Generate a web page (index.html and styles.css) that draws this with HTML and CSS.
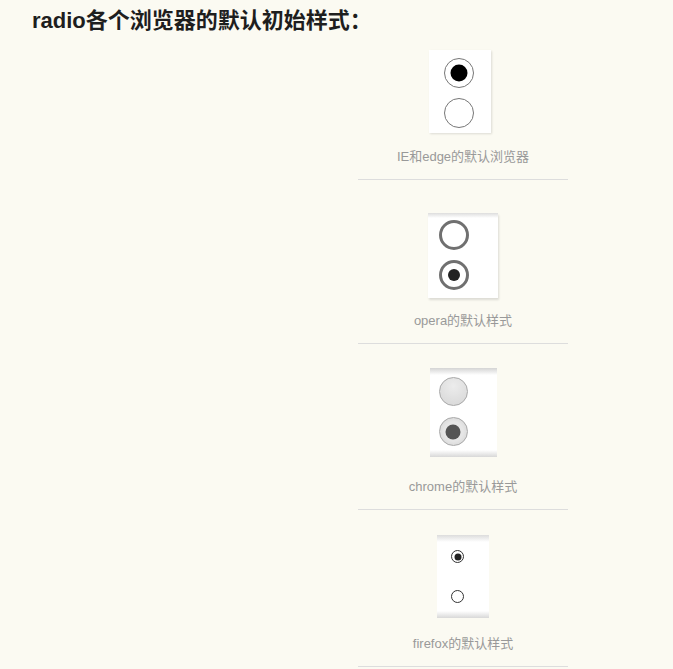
FILE: index.html
```html
<!DOCTYPE html>
<html lang="zh-CN">
  <head>
    <meta charset="UTF-8" />
    <meta name="viewport" content="width=device-width, initial-scale=1.0" />
    <title>radio默认样式</title>
    <link rel="stylesheet" href="styles.css">
  </head>
  <body>
    <h2 class="title">radio各个浏览器的默认初始样式：</h2>

    <div class="shots">
      <div class="shot shot-ie">
        <div class="frame">
          <span class="radio checked"></span>
          <span class="radio"></span>
        </div>
        <p class="caption">IE和edge的默认浏览器</p>
      </div>

      <div class="shot shot-opera">
        <div class="frame">
          <span class="radio"></span>
          <span class="radio checked"></span>
        </div>
        <p class="caption">opera的默认样式</p>
      </div>

      <div class="shot shot-chrome">
        <div class="frame">
          <span class="radio"></span>
          <span class="radio checked"></span>
        </div>
        <p class="caption">chrome的默认样式</p>
      </div>

      <div class="shot shot-firefox">
        <div class="frame">
          <span class="radio checked"></span>
          <span class="radio"></span>
        </div>
        <p class="caption">firefox的默认样式</p>
      </div>
    </div>
  </body>
</html>
```

FILE: styles.css
```css
* {
  margin: 0;
  padding: 0;
  box-sizing: border-box;
}

body {
  font-family: 'Liberation Sans', 'Noto Sans CJK SC', sans-serif;
  background: #fbfaf2;
  color: #333;
}

.title {
  margin: 8px 0 0 32px;
  font-size: 22px;
  line-height: 26px;
  font-weight: bold;
  color: #1e1e1e;
}

.shots {
  width: 210px;
  margin-left: 358px;
  margin-top: 16px;
}

.shot {
  display: flex;
  flex-direction: column;
  align-items: center;
  border-bottom: 1px solid #ddd;
  padding-bottom: 14px;
}

.caption {
  font-size: 13px;
  line-height: 16px;
  color: #999;
}

.frame {
  display: flex;
  flex-direction: column;
  align-items: flex-start;
  background: #fff;
}

.radio {
  display: block;
  position: relative;
  border-radius: 50%;
}

.radio.checked::after {
  content: '';
  position: absolute;
  top: 50%;
  left: 50%;
  border-radius: 50%;
  transform: translate(-50%, -50%);
}

/* IE / edge */
.shot-ie .frame {
  width: 62px;
  height: 83px;
  padding: 8px 0 0 15px;
  gap: 10px;
  margin-left: -6px;
  box-shadow: 1px 1px 2px rgba(0, 0, 0, 0.12);
}

.shot-ie .radio {
  width: 30px;
  height: 30px;
  border: 1px solid #777;
  background: #fff;
}

.shot-ie .radio.checked::after {
  width: 17px;
  height: 17px;
  background: #000;
}

.shot-ie .caption {
  margin-top: 16px;
}

/* opera */
.shot-opera {
  padding-top: 33px;
}

.shot-opera .frame {
  width: 70px;
  height: 85px;
  padding: 7px 0 0 11px;
  gap: 10px;
  background: linear-gradient(#ddd, #fff 5px);
  box-shadow: 1px 2px 2px rgba(0, 0, 0, 0.12);
}

.shot-opera .radio {
  width: 30px;
  height: 30px;
  border: 3px solid #707070;
}

.shot-opera .radio.checked::after {
  width: 12px;
  height: 12px;
  background: #222;
}

.shot-opera .caption {
  margin-top: 15px;
}

/* chrome */
.shot-chrome {
  padding-top: 24px;
}

.shot-chrome .frame {
  width: 67px;
  height: 89px;
  padding: 9px 0 0 9px;
  gap: 11px;
  background: linear-gradient(#d4d4d4, #fff 7px, #fff 82px, #d8d8d8);
}

.shot-chrome .radio {
  width: 29px;
  height: 29px;
  border: 1px solid #a8a8a8;
  background: radial-gradient(circle at 50% 30%, #ececec, #d6d6d6);
}

.shot-chrome .radio.checked {
  background: radial-gradient(circle at 50% 50%, #e6e6e6 50%, #cfcfcf);
}

.shot-chrome .radio.checked::after {
  width: 15px;
  height: 15px;
  background: #555;
}

.shot-chrome .caption {
  margin-top: 22px;
}

/* firefox */
.shot-firefox {
  padding-top: 25px;
}

.shot-firefox .frame {
  width: 52px;
  height: 83px;
  padding: 15px 0 0 14px;
  gap: 27px;
  background: linear-gradient(#dcdcdc, #fff 7px, #fff 76px, #d8d8d8);
}

.shot-firefox .radio {
  width: 13px;
  height: 13px;
  border: 1px solid #333;
  background: #fff;
}

.shot-firefox .radio.checked::after {
  width: 7px;
  height: 7px;
  background: #222;
}

.shot-firefox .caption {
  margin-top: 18px;
}
```
